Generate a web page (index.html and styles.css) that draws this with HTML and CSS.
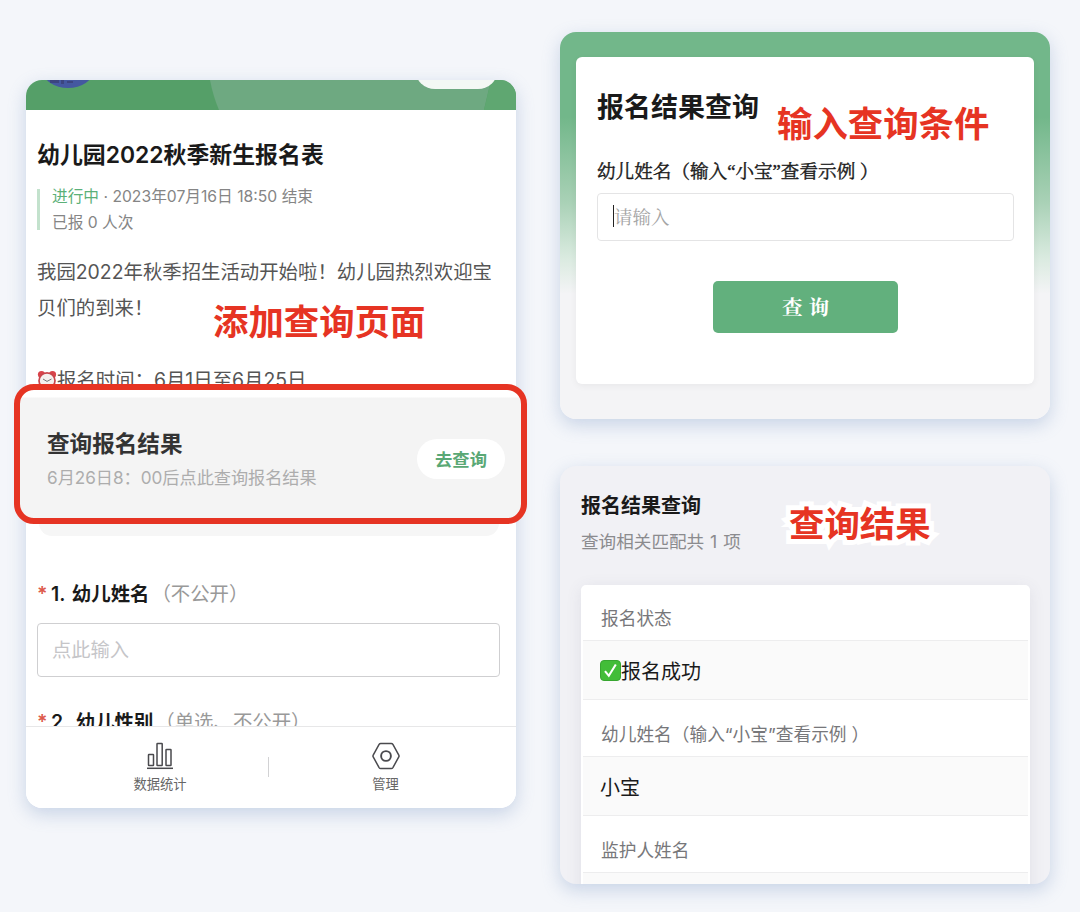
FILE: index.html
```html
<!DOCTYPE html>
<html lang="zh-CN">
<head>
<meta charset="utf-8">
<title>报名结果查询</title>
<link rel="stylesheet" href="styles.css">
</head>
<body>
<main class="board">
  <section class="card form-card">
    <div class="banner">
      <svg width="490" height="30" viewBox="0 0 490 30">
        <path d="M184 0H465L458 30H193Q187 16 184 0Z" fill="#6ea981"/>
        <path d="M465 0H490V30H458Z" fill="#5fa771"/>
        <ellipse cx="42" cy="-9" rx="25" ry="17" fill="#4458a0"/>
        <path d="M24 0h9v3h-9zM35 0h3v4h-3zM41 1h6v2h-6z" fill="#3c4580"/>
        <rect x="389" y="-32" width="83" height="41" rx="20" fill="#f3f8f4"/>
      </svg>
    </div>
    <div class="form-body">
      <h1 class="form-title">幼儿园2022秋季新生报名表</h1>
      <div class="meta">
        <p><span class="status">进行中</span> · 2023年07月16日 18:50 结束</p>
        <p>已报 0 人次</p>
      </div>
      <div class="intro">
        <p class="intro-line">我园2022年秋季招生活动开始啦！幼儿园热烈欢迎宝</p>
        <p>贝们的到来！</p>
        <p class="time"><svg class="clock" width="20" height="20" viewBox="0 0 20 20">
          <circle cx="4.5" cy="4.5" r="3.6" fill="#d9434a"/><circle cx="15.5" cy="4.5" r="3.6" fill="#d9434a"/>
          <circle cx="10" cy="10.8" r="8" fill="#f4f0ee" stroke="#c8454b" stroke-width="1.7"/>
          <path d="M6 9l4 2.4L14.5 9" fill="none" stroke="#777" stroke-width="1"/>
        </svg>报名时间：6月1日至6月25日</p>
      </div>
    </div>
    <div class="query-tail"></div>
    <div class="fields">
      <p class="question"><span class="star">*</span><b>1. 幼儿姓名</b><span class="hint">（不公开）</span></p>
      <div class="input">点此输入</div>
      <p class="question second"><span class="star">*</span><b>2. 幼儿性别</b><span class="hint">（单选、不公开）</span></p>
    </div>
    <nav class="tabs">
      <div class="tab">
        <svg width="28" height="28" viewBox="0 0 28 28" fill="none" stroke="#4a4a4e" stroke-width="1.5">
          <rect x="2.5" y="12.5" width="5" height="11" rx=".5"/><rect x="11" y="1.5" width="5.2" height="22" rx=".5"/><rect x="20" y="7.5" width="5" height="16" rx=".5"/><path d="M1 26.3h26"/>
        </svg>
        <span>数据统计</span>
      </div>
      <i class="split"></i>
      <div class="tab">
        <svg width="28" height="28" viewBox="0 0 28 28" fill="none" stroke="#4a4a4e" stroke-width="1.5">
          <path d="M8.7 1.5H19.3Q20.3 1.5 20.9 2.4L26.8 13.1Q27.3 14 26.8 14.9L20.9 25.6Q20.3 26.5 19.3 26.5H8.7Q7.7 26.5 7.1 25.6L1.2 14.9Q.7 14 1.2 13.1L7.1 2.4Q7.7 1.5 8.7 1.5Z"/><circle cx="14" cy="14" r="4.9" stroke-width="1.9"/>
        </svg>
        <span>管理</span>
      </div>
    </nav>
  </section>

  <div class="column">
    <section class="card search-card">
      <div class="search-panel">
        <h2 class="search-title">报名结果查询</h2>
        <p class="search-label">幼儿姓名（输入“小宝”查看示例 ）</p>
        <div class="search-input"><i class="caret"></i>请输入</div>
        <div class="search-button">查 询</div>
      </div>
    </section>
    <section class="card result-card">
      <h2 class="result-title">报名结果查询</h2>
      <p class="result-sub">查询相关匹配共 1 项</p>
      <div class="result-list">
        <div class="key">报名状态</div>
        <div class="value"><svg class="check" width="21" height="21" viewBox="0 0 21 21">
          <rect x=".5" y=".5" width="20" height="20" rx="3.5" fill="#42bd38" stroke="#37a630"/>
          <path d="M5 11.2l3.8 4.6L15.8 4.5" fill="none" stroke="#fff" stroke-width="2.1"/>
        </svg>报名成功</div>
        <div class="key">幼儿姓名（输入“小宝”查看示例 ）</div>
        <div class="value">小宝</div>
        <div class="key">监护人姓名</div>
        <div class="value"></div>
      </div>
    </section>
  </div>

  <div class="query-frame">
    <div>
      <h2 class="query-title">查询报名结果</h2>
      <p class="query-sub">6月26日8：00后点此查询报名结果</p>
    </div>
    <span class="query-go">去查询</span>
  </div>
  <strong class="note note-add">添加查询页面</strong>
  <strong class="note note-input">输入查询条件</strong>
  <strong class="note note-result">查询结果</strong>
</main>
</body>
</html>
```
FILE: styles.css
```css
* { box-sizing: border-box; margin: 0; padding: 0; }
body {
  width: 1080px; height: 912px; overflow: hidden; background: #f4f6fa;
  font-family: Inter, "Noto Sans CJK SC", sans-serif; color: #1a1a1a;
}
p, h1, h2, .key, .value { white-space: nowrap; }
.board { position: relative; display: flex; height: 912px; padding-left: 26px; gap: 44px; align-items: flex-start; }
.card { width: 490px; border-radius: 16px; overflow: hidden; box-shadow: 0 6px 18px rgba(110, 140, 190, .32); }
.column { display: flex; flex-direction: column; gap: 47px; padding-top: 32px; }

.form-card { display: flex; flex-direction: column; height: 728px; margin-top: 80px; background: #fff; }
.banner { height: 30px; background: #559f68; }
.banner svg { display: block; }
.form-body { height: 414px; padding: 29px 11px 0; }
.form-title { font-size: 22.9px; line-height: 32px; font-weight: 600; }
.meta { display: flow-root; margin-top: 18px; height: 41px; padding-left: 12px; border-left: 3px solid #c3e2cd; font-size: 15.7px; line-height: 25.5px; color: #858585; }
.meta p:first-child { margin-top: -5px; }
.status { color: #5bb078; }
.intro { margin-top: 24px; font-size: 19.4px; line-height: 36.3px; color: #555; }
.time { display: flex; align-items: center; margin-top: 35.5px; }
.query-tail { height: 13px; margin: 0 17px 0 13px; background: #f6f6f6; border-radius: 0 0 14px 14px; }
.fields { height: 190px; padding: 43px 11px 0; overflow: hidden; }
.question { display: flex; height: 29px; font-size: 19.4px; line-height: 30px; }
.question b { font-weight: 600; word-spacing: 2px; }
.star { width: 14px; font-weight: 600; color: #dd5a4b; }
.hint { margin-left: 2px; color: #999; }
.input { width: 463px; height: 54px; margin-top: 15px; padding-left: 14px; border: 1px solid #cfcfd1; border-radius: 4px; font-size: 19.3px; line-height: 52px; color: #c5c5c8; }
.second { margin-top: 30px; }
.tabs { display: flex; flex: none; height: 82px; padding-top: 15px; border-top: 1px solid #e7e7e8; background: #fff; }
.tab { display: flex; flex-direction: column; align-items: center; width: 225px; gap: 4px; font-size: 13.3px; line-height: 20px; color: #666; }
.tab:first-child { width: 242px; padding-left: 26px; }
.tab:last-child { width: 236px; padding-right: 3px; }
.split { width: 1px; height: 20px; margin-top: 15px; background: #d2d2d4; }

.search-card { height: 387px; padding: 25px 16px; background: linear-gradient(#72b78a 0, #72b78a 85px, #a9d1b6 170px, #d9eadf 225px, #f4f4f6 262px); }
.search-panel { height: 327px; padding: 32px 20px 0 21px; border-radius: 6px; background: #fff; box-shadow: 0 2px 7px rgba(0, 0, 0, .05); }
.search-title { font-size: 27px; line-height: 38px; font-weight: 600; }
.search-label { margin-top: 32px; font-family: "Liberation Serif", "Noto Serif CJK SC", "Noto Sans CJK SC", serif; font-size: 18.6px; line-height: 26px; -webkit-text-stroke: .4px #1a1a1a; }
.search-input { display: flex; align-items: center; height: 48px; margin-top: 8px; padding: 0 0 2px 15px; border: 1px solid #e4e4e5; border-radius: 4px; font-family: "Noto Serif CJK SC", "Noto Sans CJK SC", serif; font-size: 18.5px; color: #a5a5a5; }
.caret { width: 1px; height: 22px; background: #222; }
.search-button { width: 185px; height: 52px; margin: 40px auto 0; border-radius: 5px; background: #62b07d; color: #fff; font-family: "Noto Serif CJK SC", "Noto Sans CJK SC", serif; font-size: 20.5px; font-weight: 700; line-height: 50px; text-align: center; word-spacing: 1px; }

.result-card { height: 418px; padding: 26px 20px 0 21px; background: #f1f1f5; }
.result-title { font-size: 20px; line-height: 28px; font-weight: 600; }
.result-sub { margin-top: 9px; font-size: 17.6px; line-height: 26px; color: #8b8b8e; word-spacing: 1px; }
.result-list { height: 330px; margin-top: 30px; padding: 0 2px; border-radius: 5px 5px 0 0; background: #fff; box-shadow: 0 3px 16px rgba(80, 80, 110, .1); }
.key { height: 55px; padding: 11px 18px 0; font-size: 17.7px; line-height: 46px; color: #77777a; }
.key:not(:first-child) { height: 56px; padding-top: 12px; }
.value { display: flex; align-items: center; height: 60px; padding-left: 17px; border-top: 1px solid #ededee; border-bottom: 1px solid #ededee; background: #fafafa; font-size: 20px; }

.query-frame {
  position: absolute; left: 14px; top: 384px; width: 513px; height: 140px; padding: 0 16px 0 27px;
  display: flex; align-items: center; justify-content: space-between;
  border: 6px solid #e63423; border-radius: 20px; background: linear-gradient(#fff 7px, #f4f4f4 8px);
}
.query-title { margin-top: 11px; font-size: 22.6px; line-height: 32px; font-weight: 600; color: #333; }
.query-sub { margin-top: 5px; font-size: 17.15px; line-height: 26px; color: #adadad; }
.query-go { width: 88px; height: 40px; margin-top: 9px; border-radius: 20px; background: #fff; color: #5aa875; font-size: 17.3px; font-weight: 600; line-height: 41px; text-align: center; }
.note { position: absolute; font-size: 35.4px; line-height: 44px; font-weight: 700; color: #e63423; white-space: nowrap; -webkit-text-stroke: 10px #fff; paint-order: stroke fill; }
.note-add { left: 213px; top: 301px; }
.note-input { left: 777px; top: 103px; }
.note-result { left: 789px; top: 503px; }
```
